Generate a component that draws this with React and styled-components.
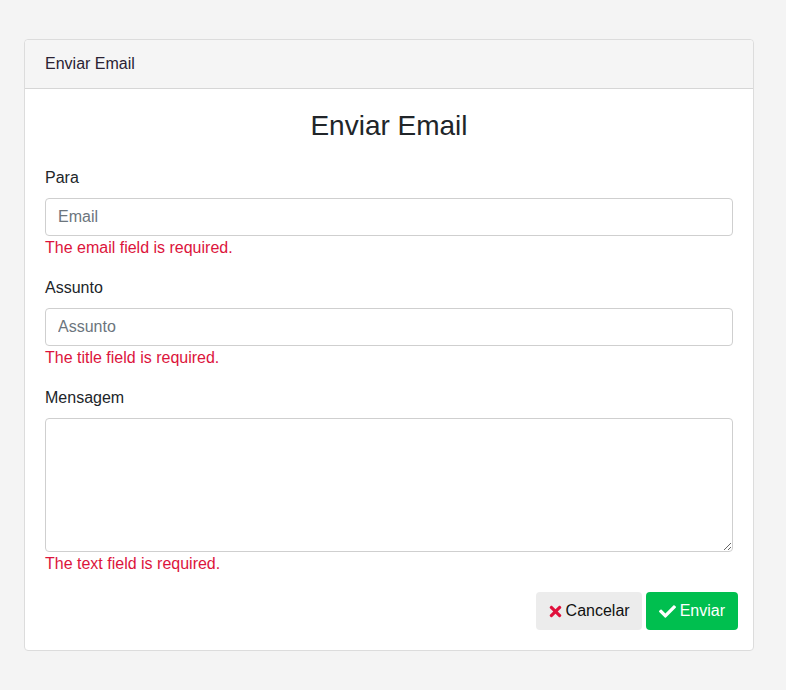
import React from 'react';
import styled, { createGlobalStyle } from 'styled-components';
import { FaTimes, FaCheck } from 'react-icons/fa';

const GlobalStyle = createGlobalStyle`
  * { box-sizing: border-box; }
  body {
    margin: 0;
    background: #f4f4f4;
    font-family: "Liberation Sans", Arial, sans-serif;
    color: #212529;
  }
`;

const Page = styled.div`
  padding: 39px 0 0 24px;
`;

const Card = styled.div`
  width: 730px;
  background: #fff;
  border: 1px solid #dcdcdc;
  border-radius: 4px;
`;

const CardHeader = styled.div`
  background: #f5f5f5;
  border-bottom: 1px solid #d6d6d6;
  border-radius: 4px 4px 0 0;
  padding: 12px 20px;
  font-size: 16px;
  line-height: 24px;
  color: #2a2233;
`;

const CardBody = styled.div`
  padding: 20px 20px 20px 20px;
`;

const Title = styled.h3`
  margin: 0 0 23px;
  text-align: center;
  font-size: 28px;
  font-weight: 400;
  line-height: 34px;
  color: #212529;
`;

const Group = styled.div`
  margin-bottom: 16px;
`;

const Label = styled.label`
  display: block;
  font-size: 16px;
  line-height: 24px;
  margin-bottom: 8px;
`;

const Input = styled.input`
  display: block;
  width: 100%;
  height: 38px;
  padding: 6px 12px;
  font-size: 16px;
  font-family: inherit;
  color: #495057;
  border: 1px solid #cfcfcf;
  border-radius: 4px;
  background: #fff;
  &::placeholder { color: #6c757d; }
`;

const TextArea = styled.textarea`
  display: block;
  width: 100%;
  height: 134px;
  padding: 6px 12px;
  font-size: 16px;
  font-family: inherit;
  border: 1px solid #cfcfcf;
  border-radius: 4px;
  resize: vertical;
`;

const Error = styled.div`
  color: #dc143c;
  font-size: 16px;
  line-height: 24px;
`;

const Actions = styled.div`
  display: flex;
  justify-content: flex-end;
  gap: 4px;
  margin: 1px -5px 0 0;
`;

const Button = styled.button`
  display: inline-flex;
  align-items: center;
  gap: ${p => (p.primary ? '4px' : '2px')};
  height: 38px;
  padding: ${p => (p.primary ? '0 13px' : '0 12px 0 11px')};
  border: none;
  border-radius: 4px;
  font-size: 16px;
  font-family: inherit;
  cursor: pointer;
  background: ${p => (p.primary ? '#00bf4f' : '#ececec')};
  color: ${p => (p.primary ? '#fff' : '#111')};
  svg { color: ${p => (p.primary ? '#fff' : '#e0103c')}; }
`;

export default function App() {
  return (
    <Page>
      <GlobalStyle />
      <Card>
        <CardHeader>Enviar Email</CardHeader>
        <CardBody>
          <Title>Enviar Email</Title>
          <Group>
            <Label>Para</Label>
            <Input placeholder="Email" />
            <Error>The email field is required.</Error>
          </Group>
          <Group>
            <Label>Assunto</Label>
            <Input placeholder="Assunto" />
            <Error>The title field is required.</Error>
          </Group>
          <Group>
            <Label>Mensagem</Label>
            <TextArea />
            <Error>The text field is required.</Error>
          </Group>
          <Actions>
            <Button><FaTimes size={17} />Cancelar</Button>
            <Button primary><FaCheck size={17} />Enviar</Button>
          </Actions>
        </CardBody>
      </Card>
    </Page>
  );
}
